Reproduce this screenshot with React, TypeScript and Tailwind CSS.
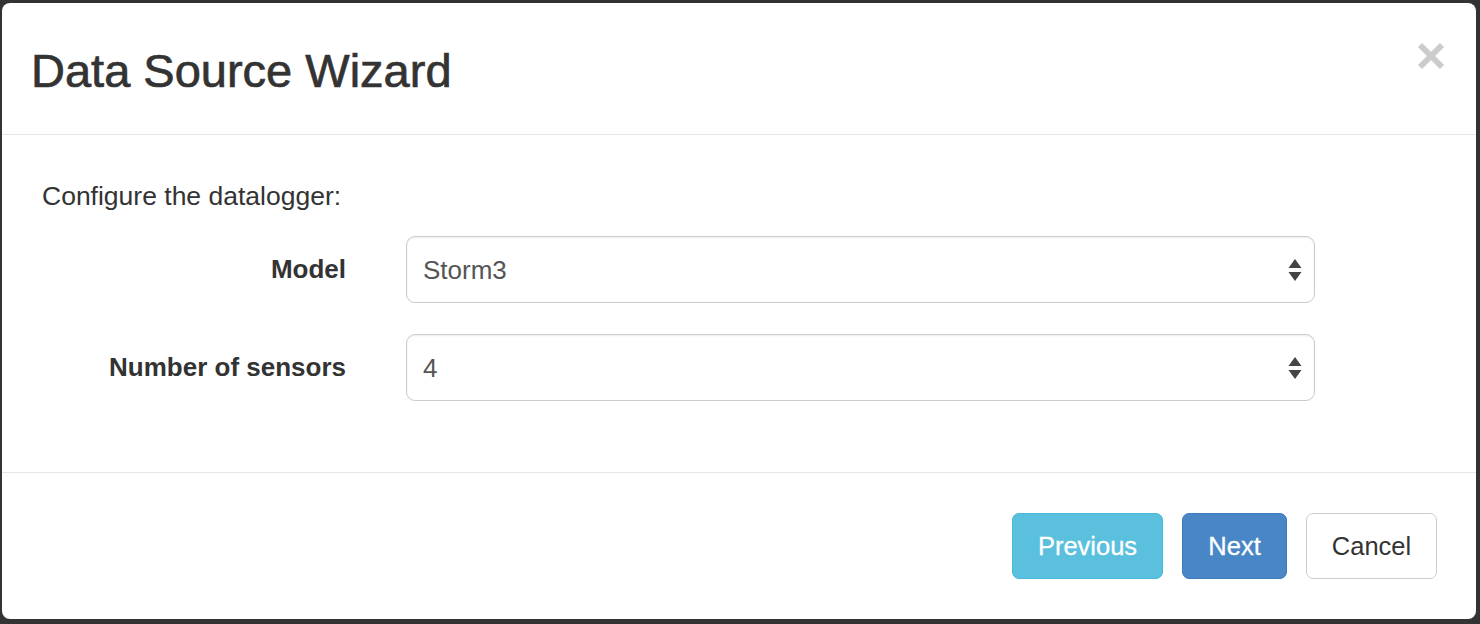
import React from "react";

const font = { fontFamily: '"Liberation Sans", Arial, Helvetica, sans-serif' };

function SelectBox({ value }: { value: string }) {
  return (
    <div className="flex h-[67px] w-[909px] items-center justify-between rounded-[9px] border border-[#cccccc] bg-white pl-[16px] pr-[12px] shadow-[inset_0_1px_2px_rgba(0,0,0,0.08)]">
      <span className="text-[26px] leading-none text-[#555555]">{value}</span>
      <svg width="14" height="24" viewBox="0 0 14 24" aria-hidden>
        <polygon points="0.5,10 13.5,10 7,1" fill="#444444" />
        <polygon points="0.5,14 13.5,14 7,23" fill="#444444" />
      </svg>
    </div>
  );
}

function Row({ label, value }: { label: string; value: string }) {
  return (
    <div className="flex items-center">
      <label className="w-[305px] pr-[1px] text-right text-[26px] font-bold text-[#333333]">{label}</label>
      <div className="ml-[59px]">
        <SelectBox value={value} />
      </div>
    </div>
  );
}

export default function App() {
  return (
    <div className="h-[624px] w-[1480px] overflow-hidden bg-[#333333] pl-[2px] pt-[3px]" style={font}>
      <div className="flex h-[616px] w-[1474px] flex-col rounded-[8px] bg-white">
        {/* Header */}
        <div className="flex items-start justify-between border-b border-[#e5e5e5] pb-[37px] pl-[29px] pr-[31px] pt-[42px]">
          <h2 className="text-[47px] font-normal leading-[52px] text-[#333333] [-webkit-text-stroke:0.7px_#333333]">
            Data Source Wizard
          </h2>
          <svg width="28" height="28" viewBox="0 0 28 28" className="-mt-[3px]" aria-hidden>
            <line x1="3" y1="3" x2="25" y2="25" stroke="#cccccc" strokeWidth="6" />
            <line x1="25" y1="3" x2="3" y2="25" stroke="#cccccc" strokeWidth="6" />
          </svg>
        </div>

        {/* Body */}
        <div className="flex-1 pb-[70px] pl-[40px] pt-[43px]">
          <p className="text-[26.5px] leading-[37px] text-[#333333]">Configure the datalogger:</p>
          <div className="mt-[21px] flex flex-col gap-[31px]">
            <Row label="Model" value="Storm3" />
            <Row label="Number of sensors" value="4" />
          </div>
        </div>

        {/* Footer */}
        <div className="flex justify-end gap-[19px] border-t border-[#e5e5e5] pb-[40px] pr-[39px] pt-[40px]">
          <button className="h-[66px] w-[151px] rounded-[7px] border border-[#46b8da] bg-[#5bc0de] text-[25.5px] text-white [-webkit-text-stroke:0.3px_#ffffff]">
            Previous
          </button>
          <button className="h-[66px] w-[105px] rounded-[7px] border border-[#3e7dbd] bg-[#4886c5] text-[25.5px] text-white [-webkit-text-stroke:0.3px_#ffffff]">
            Next
          </button>
          <button className="h-[66px] w-[131px] rounded-[7px] border border-[#cccccc] bg-white text-[25.5px] text-[#333333]">
            Cancel
          </button>
        </div>
      </div>
    </div>
  );
}
